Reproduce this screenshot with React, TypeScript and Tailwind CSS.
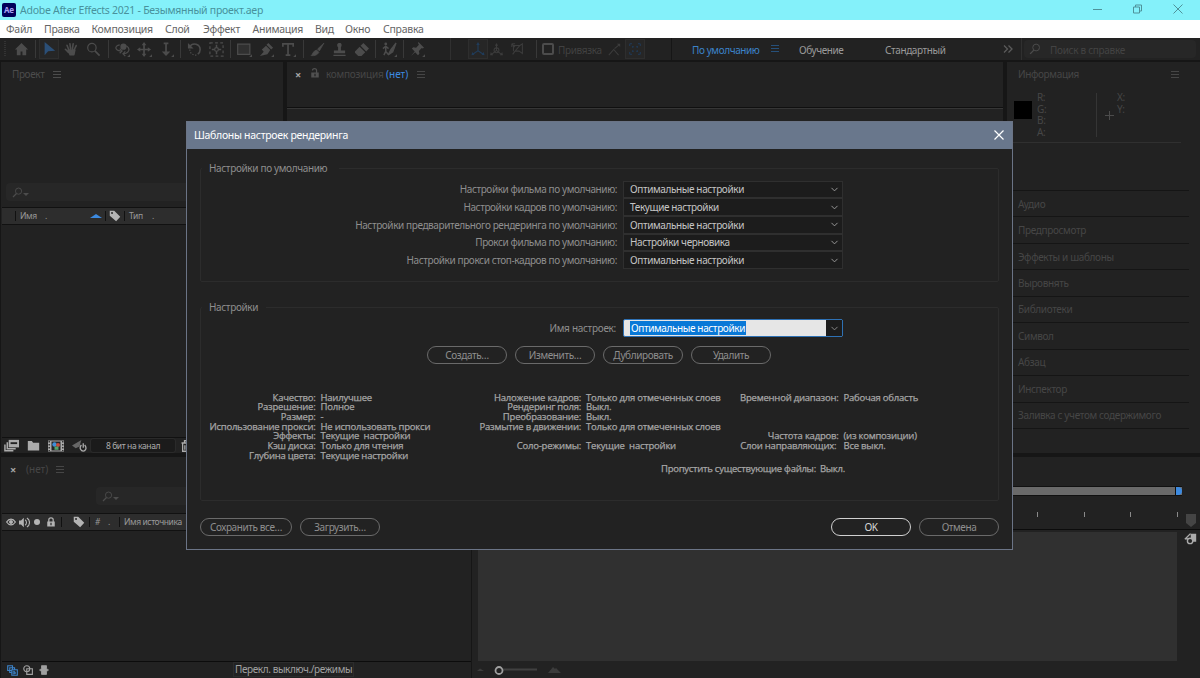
import type { ReactNode } from "react";
import { ChevronDown } from "lucide-react";

type IconProps = { children: ReactNode; size?: number; className?: string };

function Icon({ children, size = 16, className = "" }: IconProps) {
  return (
    <svg
      width={size}
      height={size}
      viewBox="0 0 16 16"
      fill="none"
      stroke="currentColor"
      strokeWidth={1.3}
      className={`shrink-0 ${className}`}
    >
      {children}
    </svg>
  );
}

const corner = <path d="M16 13v3h-3z" fill="currentColor" stroke="none" />;

const icons = {
  home: <path d="M8 1 1 8h2v6h4v-4h2v4h4V8h2z" fill="currentColor" stroke="none" />,
  select: <path d="M3 0v15l4-4.500 8-.5z" fill="currentColor" stroke="none" />,
  hand: (
    <path
      d="M5 8 3.200 3.500M7 7 6.300 1.800M9 7l.8-5.200M11 8l2-4.200M4.500 11 1.500 7.800M4.500 8.500h7l-1 5h-4z"
      fill="currentColor"
      strokeWidth={1.7}
      strokeLinecap="round"
      strokeLinejoin="round"
    />
  ),
  zoom: (
    <>
      <circle cx="6.300" cy="6" r="4.500" />
      <path d="m9.500 9.500 5 5" strokeWidth={1.8} />
    </>
  ),
  orbit: (
    <>
      <circle cx="9" cy="5" r="3.300" fill="currentColor" stroke="none" />
      <path d="M5 3C-1 4 0 9 6 9.500M5 7l2.500 2.500L5 12M12 4c5 3 3 8-3 8.500M11 10l-2.500 2.500L11 15" />
      {corner}
    </>
  ),
  pan: (
    <>
      <path d="M7.500 2v12M2 8h11" strokeWidth={1.8} />
      <path d="M7.500 0 5 3.500h5zM7.500 16 5 12.500h5zM0 8l3.500-2.500v5zM15 8l-3.500-2.500v5z" fill="currentColor" stroke="none" />
      {corner}
    </>
  ),
  dolly: (
    <>
      <path d="M7.500 1v12M5 1.500h5" strokeWidth={1.8} />
      <path d="M3 10h9l-4.500 5z" fill="currentColor" stroke="none" />
      {corner}
    </>
  ),
  rotate: (
    <>
      <path d="M3 5c3-5 11-3 11 3 0 2-1 4-2.500 5" strokeWidth={1.7} />
      <path d="M3 8c0 4 3 6 7 6" strokeDasharray="1.500 1.500" />
      <path d="M1 1v6h6z" fill="currentColor" stroke="none" />
    </>
  ),
  anchor: (
    <>
      <rect x="1" y="1" width="14" height="14" strokeDasharray="3 2.500" />
      <circle cx="8" cy="8" r="2" />
      <path d="M8 3v3M8 10v3M3 8h3M10 8h3" strokeWidth={1.6} />
    </>
  ),
  rect: (
    <>
      <path d="M.7 2.200h13v11H.7z" fill="#303030" />
      {corner}
    </>
  ),
  pen: (
    <>
      <path d="M10 1 15 6l-2 2-5-5zM7.500 4 12 8.500 9 13 1 15 5 10.500 3 8z" fill="currentColor" stroke="none" />
      {corner}
    </>
  ),
  type: (
    <>
      <path d="M2 5V2h11v3M7.500 2v12M5 14h5" strokeWidth={1.8} />
      {corner}
    </>
  ),
  brush: <path d="M15 1 8 7.500l2 2zM7 8.500 9.500 11C8 14 5 15 1 14.500c2-1 2-5 6-6z" fill="currentColor" strokeWidth={0.7} />,
  stamp: (
    <path d="M8 1c3 0 2.500 3 1.500 4.500V9H14v3H2V9h4.500V5.500C5 4 5 1 8 1zM1.500 13.500h13V15h-13z" fill="currentColor" stroke="none" />
  ),
  eraser: <path d="M10 1 16 7l-3 3-6-6zM6 5l6 6-4 4H4.500L1 11.500V10z" fill="currentColor" stroke="none" />,
  roto: (
    <>
      <circle cx="4" cy="2" r="1.500" fill="currentColor" stroke="none" />
      <path d="M1 7l3-2.500L7 7M4 5v5l-2 4M4 10l2.500 3" strokeWidth={1.6} />
      <path d="M15 1 9.500 8l-3 6 5-3.500z" fill="currentColor" />
      {corner}
    </>
  ),
  pin: (
    <>
      <path d="m9 0 6 6-1.500 1-1-.5-3 3 .5 3-1.500 1.500-3-3L1 15l4-5-3-3 1.500-1.500 3 .5 3-3L8.500 1z" fill="currentColor" stroke="none" />
      {corner}
    </>
  ),
  axis: (
    <>
      <path d="M8 2v8L2 14M8 10l6 4" />
      <path d="M8 0 6 3.500h4zM.5 15l1-3.500L4 14.500zM15.500 15l-1-3.500-2.500 3z" fill="currentColor" stroke="none" />
    </>
  ),
  worldAxis: (
    <>
      <circle cx="8" cy="9" r="3" />
      <path d="M8 2v7l-6 5M8 9l6 5" />
      <path d="M8 0 6 3.500h4zM0 15l1-4 3 4zM16 15l-1-4-3 4z" fill="currentColor" stroke="none" />
    </>
  ),
  viewAxis: <path d="M3 3h8l3-2v12l-4-3H5l-3 4M3 3v7M1 1l4 4M1 1h4M1 1v4M11 3l-6 7" />,
  snap: (
    <>
      <path d="m1 15 6-7 6 7M8 7l6-5" />
      <path d="M11 1h4v4z" fill="currentColor" stroke="none" />
    </>
  ),
  bounds: (
    <>
      <path d="M1 4V1h3M12 1h3v3M15 12v3h-3M4 15H1v-3" />
      <path d="M4 5h2.500M9.500 5H12M4 11h2.500M9.500 11H12M5 4v2.500M11 4v2.500M5 9.500V12M11 9.500V12" strokeWidth={1.1} />
    </>
  ),
  search: (
    <>
      <circle cx="9.500" cy="6" r="4.500" />
      <path d="m6.500 9.500-5 5" strokeWidth={1.8} />
    </>
  ),
  tag: <path d="M1 1h6l8 8-5.500 6L1 7.500zM4 2.700a1.300 1.300 0 1 0 .1 2.600 1.300 1.300 0 0 0-.1-2.600z" fill="currentColor" fillRule="evenodd" stroke="none" />,
  eye: (
    <>
      <path d="M1 8c4-6 10-6 14 0-4 6-10 6-14 0z" strokeWidth={2} />
      <circle cx="8" cy="8" r="2.500" fill="currentColor" />
    </>
  ),
  speaker: (
    <>
      <path d="M0 5h3l4-4v14l-4-4H0z" fill="currentColor" stroke="none" />
      <path d="M9 4c2.500 2 2.500 6 0 8M11.500 1.500c5 3 5 10 0 13" strokeWidth={1.6} />
    </>
  ),
  lock: (
    <>
      <path d="M4.500 8V4.500c0-4 7-4 7 0V8" strokeWidth={2} />
      <path d="M2 7h12v8H2zM7 9v4h2V9z" fill="currentColor" fillRule="evenodd" stroke="none" />
    </>
  ),
  unlock: (
    <>
      <path d="M4 4c0-4 6.500-4 6.500 0v4" strokeWidth={2} />
      <path d="M2 7h12v8H2zM7 9v4h2V9z" fill="currentColor" fillRule="evenodd" stroke="none" />
    </>
  ),
  footage: (
    <>
      <path d="M5 2h11v8H5z" fill="currentColor" stroke="none" />
      <path d="M7 4.500h7v2H7z" fill="#222" stroke="none" />
      <path d="M3.500 4.500v7h9M1 7v6.500h9" strokeWidth={1.6} />
    </>
  ),
  folder: <path d="M1 2.500h5l1.500 2H15V14H1z" fill="currentColor" stroke="none" />,
  comp: (
    <>
      <path d="M0 2.500h16v11H0z" fill="currentColor" stroke="none" />
      <path d="M1.200 3v10M14.800 3v10" stroke="#222" strokeDasharray="1.500 1.500" />
      <path d="M3.500 3.500h9v9h-9z" fill="#252525" stroke="none" />
      <circle cx="6.500" cy="6.500" r="2.200" fill="#3f8fd8" stroke="none" />
      <circle cx="10" cy="7" r="2" fill="#c44c3c" stroke="none" />
      <path d="M6.500 8.500h4v3.300h-4z" fill="#55a36a" stroke="none" />
    </>
  ),
  rocket: (
    <>
      <path d="M0 8 10 2 8 9l-4 2zM1 13l3-4" fill="currentColor" stroke="none" opacity={0.5} />
      <path d="M10 7.500c-3 3.500 0 6.500 2 6.500s4.500-3 1.500-6.500M12 5.500v5" strokeWidth={1.4} />
    </>
  ),
  trash: <path d="M2 4h12M6 3V1h4v2M3.500 5v10h9V5M6.500 7v6M9.500 7v6" strokeWidth={1.7} />,
  switches: (
    <>
      <path d="M1 1h7v7H1zM4 4h7v7H4z" strokeWidth={1.6} />
      <path d="M7 7h8v8H7z" fill="#222" strokeWidth={1.6} />
      <path d="M9 9h2v4H9zM12 10v3" />
    </>
  ),
  modes: (
    <>
      <circle cx="6" cy="6" r="4.800" strokeWidth={1.8} />
      <path d="M6 6h9v9H6z" strokeWidth={1.8} />
    </>
  ),
  braces: <path d="M4 1h8v4l2 3-2 3v4H4v-4L2 8l2-3zM.5 7v2M15.500 7v2" fill="currentColor" />,
  compMarker: (
    <>
      <path d="M8 2h7v10H9z" fill="currentColor" stroke="none" />
      <path d="m1 9 7-7M1 8.500h5" strokeWidth={1.7} />
      <circle cx="7.500" cy="11" r="3.300" fill="#222" strokeWidth={1.7} />
    </>
  ),
};

const menu = [
  { label: "Файл", width: "w-[38px]" },
  { label: "Правка", width: "w-[47.500px]" },
  { label: "Композиция", width: "w-[73.500px]" },
  { label: "Слой", width: "w-[38px]" },
  { label: "Эффект", width: "w-[49.500px]" },
  { label: "Анимация", width: "w-[62.500px]" },
  { label: "Вид", width: "w-[30px]" },
  { label: "Окно", width: "w-[38px]" },
  { label: "Справка", width: "w-[50px]" },
];

const sidePanels = [
  "Аудио",
  "Предпросмотр",
  "Эффекты и шаблоны",
  "Выровнять",
  "Библиотеки",
  "Символ",
  "Абзац",
  "Инспектор",
  "Заливка с учетом содержимого",
];

const defaults = [
  ["Настройки фильма по умолчанию:", "Оптимальные настройки"],
  ["Настройки кадров по умолчанию:", "Текущие настройки"],
  ["Настройки предварительного рендеринга по умолчанию:", "Оптимальные настройки"],
  ["Прокси фильма по умолчанию:", "Настройки черновика"],
  ["Настройки прокси стоп-кадров по умолчанию:", "Оптимальные настройки"],
];

const qualityInfo = [
  ["Качество:", "Наилучшее"],
  ["Разрешение:", "Полное"],
  ["Размер:", "-"],
  ["Использование прокси:", "Не использовать прокси"],
  ["Эффекты:", "Текущие  настройки"],
  ["Кэш диска:", "Только для чтения"],
  ["Глубина цвета:", "Текущие настройки"],
];

const frameInfo = [
  ["Наложение кадров:", "Только для отмеченных слоев"],
  ["Рендеринг поля:", "Выкл."],
  ["Преобразование:", "Выкл."],
  ["Размытие в движении:", "Только для отмеченных слоев"],
  ["", ""],
  ["Соло-режимы:", "Текущие  настройки"],
];

const timeInfo = [
  ["Временной диапазон:", "Рабочая область"],
  ["", ""],
  ["", ""],
  ["", ""],
  ["Частота кадров:", "(из композиции)"],
  ["Слои направляющих: ", "Все выкл."],
];

function Sep() {
  return (
    <div className="flex w-[6px] shrink-0 justify-center">
      <div className="h-[18px] w-px bg-[#393939]" />
    </div>
  );
}

function Tool({ children, active, wide }: { children: ReactNode; active?: boolean; wide?: boolean }) {
  return (
    <div className={`flex shrink-0 justify-center ${wide ? "w-[23px]" : "w-[22px]"}`}>
      <div
        className={`flex h-5 w-5 items-center justify-center ${
          active ? "border border-[#2e2e2e] bg-[#262626] text-[#2b4f77]" : ""
        }`}
      >
        <Icon size={active ? 14 : 15}>{children}</Icon>
      </div>
    </div>
  );
}

function Burger({ className = "text-[#4d4d4d]" }: { className?: string }) {
  return (
    <svg width="8" height="8" viewBox="0 0 8 8" className={`shrink-0 ${className}`} fill="currentColor">
      <path d="M0 0h8v1H0zM0 3h8v1H0zM0 6h8v1H0z" />
    </svg>
  );
}

function Toolbar() {
  return (
    <div className="flex h-6 items-center border-b-2 border-[#161616] bg-[#222222] text-[#4c4c4c]">
      <div className="ml-1 mr-1 h-4 w-[2px] bg-[repeating-linear-gradient(#333_0_1px,transparent_1px_2px)]" />
      <Tool>{icons.home}</Tool>
      <Sep />
      <Tool active>{icons.select}</Tool>
      <Tool>{icons.hand}</Tool>
      <Tool wide>{icons.zoom}</Tool>
      <Sep />
      <Tool>{icons.orbit}</Tool>
      <Tool>{icons.pan}</Tool>
      <Tool>{icons.dolly}</Tool>
      <Sep />
      <Tool>{icons.rotate}</Tool>
      <Tool>{icons.anchor}</Tool>
      <Sep />
      <Tool>{icons.rect}</Tool>
      <Tool>{icons.pen}</Tool>
      <Tool wide>{icons.type}</Tool>
      <Sep />
      <Tool>{icons.brush}</Tool>
      <Tool>{icons.stamp}</Tool>
      <Tool>{icons.eraser}</Tool>
      <Sep />
      <Tool>{icons.roto}</Tool>
      <Sep />
      <Tool>{icons.pin}</Tool>
      <div className="ml-[22px] mr-[17px] h-full w-px shrink-0 bg-[#303030]" />
      <div className="flex h-5 w-5 shrink-0 items-center justify-center border border-[#2e2e2e] bg-[#262626] text-[#203c5a]">
        <Icon size={14}>{icons.axis}</Icon>
      </div>
      <div className="flex w-[45px] shrink-0 items-center gap-[8px] pl-[2px] text-[#3c3c3c]">
        <Icon size={13}>{icons.worldAxis}</Icon>
        <Icon size={13}>{icons.viewAxis}</Icon>
      </div>
      <Sep />
      <div className="ml-[3px] h-[12px] w-[12px] shrink-0 rounded-[2px] border-2 border-[#4c4c4c]" />
      <span className="ml-[4px] w-[47px] shrink-0 pt-[2px] text-[10px] tracking-[-0.350px] text-[#414141]">Привязка</span>
      <Icon size={13} className="ml-[3px] mr-[4px] text-[#3c3c3c]">{icons.snap}</Icon>
      <div className="flex h-5 w-5 shrink-0 items-center justify-center border border-[#2e2e2e] bg-[#262626] text-[#203c5a]">
        <Icon size={12}>{icons.bounds}</Icon>
      </div>
      <div className="ml-[26px] h-full w-px shrink-0 bg-[#161616]" />
      <span className="ml-[20px] w-[79px] shrink-0 pt-[2px] text-[10px] text-[#3c83c9]">По умолчанию</span>
      <Burger className="text-[#26507a]" />
      <span className="ml-[20px] w-[86px] shrink-0 pt-[2px] text-[10px] text-[#9a9a9a]">Обучение</span>
      <span className="w-[118px] shrink-0 pt-[2px] text-[10px] text-[#9a9a9a]">Стандартный</span>
      <svg width="10" height="8" viewBox="0 0 10 8" fill="none" stroke="#5a5a5a" strokeWidth="1.300">
        <path d="m1 .5 3.500 3.500L1 7.500M5.500.5 9 4 5.500 7.500" />
      </svg>
      <div className="ml-[8px] mr-[2px] h-full w-px shrink-0 bg-[#303030]" />
      <div className="flex h-[18px] w-[172px] shrink-0 items-center rounded bg-[#272727] pl-[5px]">
        <Icon size={12}>{icons.search}</Icon>
        <span className="ml-[9px] pt-[2px] text-[10px] tracking-[-0.300px] text-[#434343]">Поиск в справке</span>
      </div>
    </div>
  );
}

function ProjectPanel() {
  return (
    <section className="ml-px flex w-[282px] shrink-0 flex-col bg-[#222222]">
      <div className="flex h-[121px] items-start gap-[9px] pl-[11px] pt-[5px]">
        <span className="w-[32px] text-[10px] leading-[15px] text-[#4c4c4c]">Проект</span>
        <Burger className="mt-[4px] text-[#4c4c4c]" />
      </div>
      <div className="ml-[5px] flex h-[18px] items-center rounded bg-[#272727] pl-[6px] text-[#4c4c4c]">
        <Icon size={11}>{icons.search}</Icon>
        <span className="mt-1 border-x-[3px] border-t-[3px] border-x-transparent border-t-[#4c4c4c]" />
      </div>
      <div className="ml-px mt-[6px] flex h-[18px] items-center border-y border-[#111] bg-[#2d2d2d] text-[8.500px] text-[#9a9a9a]">
        <span className="ml-[13px] mr-[4px] h-[10px] w-px bg-[#111]" />
        <span className="w-[25px] pt-px">Имя</span>
        <span className="w-[45px]">.</span>
        <span className="border-x-[6px] border-b-[4px] border-x-transparent border-b-[#3c8ae0]" />
        <span className="ml-[3px] mr-[3px] h-[10px] w-px bg-[#111]" />
        <Icon size={12} className="text-[#b4b4b4]">{icons.tag}</Icon>
        <span className="ml-[3px] mr-[4px] h-[10px] w-px bg-[#111]" />
        <span className="w-[23px] pt-px">Тип</span>
        <span>.</span>
      </div>
      <div className="mt-auto ml-px flex h-[16px] items-center border-t border-[#111] pl-[2px] text-[#ababab]">
        <Icon size={15}>{icons.footage}</Icon>
        <Icon size={13} className="ml-[8px]">{icons.folder}</Icon>
        <Icon size={16} className="ml-[8px]">{icons.comp}</Icon>
        <Icon size={15} className="ml-[8px]">{icons.rocket}</Icon>
        <span className="ml-[4px] flex h-[13px] w-[84px] items-center justify-center rounded-[2px] bg-[#1b1b1b] pt-px text-[8.500px] outline outline-[#2a2a2a]">
          8 бит на канал
        </span>
        <Icon size={12} className="ml-[5px]">{icons.trash}</Icon>
      </div>
    </section>
  );
}

function InfoPanel() {
  return (
    <section className="flex w-[193px] shrink-0 flex-col bg-[#222222] text-[10px] tracking-[-0.350px] text-[#464646]">
      <div className="flex h-[27px] items-start justify-between pl-[11px] pr-[21px] pt-[5px]">
        <span className="leading-[15px]">Информация</span>
        <Burger className="mt-[4px]" />
      </div>
      <div className="mr-[19px] flex h-[54px] border-b border-[#303030] pl-[7px]">
        <div className="mt-[12px] h-[18px] w-[18px] bg-black" />
        <div className="ml-[5px] flex w-[59px] flex-col pt-[3px] leading-[11.700px]">
          <span>R:</span>
          <span>G:</span>
          <span>B:</span>
          <span>A:</span>
        </div>
        <div className="mt-[4px] h-[44px] w-px bg-[#353535]" />
        <svg width="9" height="9" viewBox="0 0 9 9" stroke="#4c4c4c" className="ml-[8px] mt-[22px]">
          <path d="M4.500 0v9M0 4.500h9" />
        </svg>
        <div className="ml-[3px] flex flex-col pt-[3px] leading-[11.700px]">
          <span>X:</span>
          <span>Y:</span>
        </div>
      </div>
      <div className="mr-[11px] mt-[47px] border-t border-[#151515]">
        {sidePanels.map((name) => (
          <div key={name} className="flex h-[26.440px] items-center border-b border-[#151515] pl-[11px]">
            {name}
          </div>
        ))}
      </div>
    </section>
  );
}

function CompositionPanel() {
  return (
    <section className="mx-1 flex-1 bg-[#222222]">
      <div className="flex h-[46px] items-start border-b border-[#101010] pl-[8px] pt-[5px] text-[10px] leading-[15px] text-[#464646] shadow-[0_1px_0_#363636]">
        <span className="w-[15px] text-[11px] font-bold text-[#a4a4a4]">×</span>
        <Icon size={10} className="mr-[6px] mt-[1px] text-[#505050]">{icons.unlock}</Icon>
        <span className="w-[60px] tracking-[-0.250px]">композиция</span>
        <span className="w-[31px] text-[#3c8ae0] tracking-normal">(нет)</span>
        <Burger className="mt-[4px]" />
      </div>
    </section>
  );
}

function Timeline() {
  return (
    <div className="flex h-[221px]">
      <section className="ml-px flex w-[470px] shrink-0 flex-col bg-[#222222]">
        <div className="flex h-[30px] items-start pl-[9px] pt-[5px] text-[10px] leading-[15px] text-[#464646]">
          <span className="w-[16px] text-[11px] font-bold text-[#a4a4a4]">×</span>
          <span className="w-[30px] tracking-normal">(нет)</span>
          <Burger className="mt-[4px]" />
        </div>
        <div className="ml-[95px] flex h-[18px] items-center rounded bg-[#272727] pl-[6px] text-[#4c4c4c]">
          <Icon size={11}>{icons.search}</Icon>
          <span className="mt-1 border-x-[3px] border-t-[3px] border-x-transparent border-t-[#4c4c4c]" />
        </div>
        <div className="mt-[8px] ml-px flex h-[18px] items-center border-y border-[#111] bg-[#2d2d2d] pl-[4px] text-[8.500px] text-[#9a9a9a]">
          <Icon size={10} className="text-[#b4b4b4]">{icons.eye}</Icon>
          <Icon size={11} className="ml-[3px] text-[#b4b4b4]">{icons.speaker}</Icon>
          <span className="ml-[4px] h-[6px] w-[6px] rounded-full bg-[#b4b4b4]" />
          <Icon size={10} className="ml-[6px] text-[#b4b4b4]">{icons.lock}</Icon>
          <span className="ml-[5px] mr-[11px] h-[10px] w-px bg-[#111]" />
          <Icon size={12} className="text-[#b4b4b4]">{icons.tag}</Icon>
          <span className="ml-[4px] mr-[5px] h-[10px] w-px bg-[#111]" />
          <span className="w-[13px] text-[8px] italic">#</span>
          <span className="w-[11px]">.</span>
          <span className="mr-[4px] h-[10px] w-px bg-[#111]" />
          <span className="whitespace-nowrap pt-px">Имя источника</span>
        </div>
        <div className="ml-px mt-auto flex h-[17px] items-center border-t border-[#0c0c0c] text-[#a0a0a0]">
          <Icon size={11} className="ml-[5px] text-[#3c83c9]">{icons.switches}</Icon>
          <Icon size={10} className="ml-[5px]">{icons.modes}</Icon>
          <Icon size={10} className="ml-[6px]">{icons.braces}</Icon>
          <span className="mb-px ml-[185px] whitespace-nowrap px-px text-[10px] leading-[13px] outline outline-[#2c2c2c]">
            Перекл. выключ./режимы
          </span>
        </div>
      </section>
      <section className="ml-px flex w-[728px] flex-col bg-[#222222]">
        <div className="ml-[6px] mt-[29px] flex h-[10px] w-[704px] border-y border-[#111] bg-[#6a6a6a]">
          <span className="ml-auto h-full w-[7px] rounded-r-full border-l border-[#111] bg-[#3c8ae0]" />
        </div>
        <div className="flex h-[34px] border-b border-[#0c0c0c]">
          <div className="ml-[565px] flex gap-[45.500px] pt-[16px]">
            {[0, 1, 2, 3].map((tick) => (
              <span key={tick} className="h-[5px] w-px bg-[#8a8a8a]" />
            ))}
          </div>
          <svg width="10" height="13" viewBox="0 0 10 13" className="ml-[8px] mt-[18px]">
            <path d="M0 0h10v9l-5 4-5-4z" fill="#454545" />
          </svg>
        </div>
        <div className="flex h-[131px] border-t-2 border-[#222]">
          <div className="ml-[6px] w-[699px] bg-[#303030]" />
          <Icon size={13} className="ml-[7px] text-[#ababab]">{icons.compMarker}</Icon>
        </div>
        <div className="flex h-[17px] items-center">
          <svg width="94" height="12" viewBox="0 0 94 12" className="ml-[3px]">
            <path d="M2 7l3-2.500L9 7z" fill="#3c3c3c" />
            <path d="M28 5.500h34" stroke="#404040" strokeWidth="2" />
            <circle cx="24" cy="6.500" r="3.500" fill="none" stroke="#a0a0a0" strokeWidth="1.800" />
            <path d="m73 9 5-6 2 2 1-1 5 5z" fill="#3c3c3c" />
          </svg>
        </div>
      </section>
    </div>
  );
}

function Select({ value }: { value: string }) {
  return (
    <div className="flex h-[17.700px] w-[220px] items-center justify-between border border-[#2f2f2f] bg-[#1c1c1c] pl-[6px] pr-[2px] text-[#c4c4c4]">
      <span className="tracking-[-0.380px]">{value}</span>
      <ChevronDown size={11} strokeWidth={2} className="text-[#a0a0a0]" />
    </div>
  );
}

function Pill({ children, width = "w-[80px]", primary }: { children: ReactNode; width?: string; primary?: boolean }) {
  return (
    <button
      className={`h-[18px] shrink-0 rounded-full border text-[10px] leading-[15px] ${width} ${
        primary ? "border-[#d0d0d0] text-[#d8d8d8]" : "border-[#6a6a6a] text-[#8e8e8e]"
      }`}
    >
      {children}
    </button>
  );
}

function Info({ rows, className, label }: { rows: string[][]; className: string; label: string }) {
  return (
    <dl className={className}>
      {rows.map(([name, value], i) => (
        <div key={i} className="flex h-[9.700px] gap-[5px] whitespace-pre leading-[9.700px]">
          <dt className={`shrink-0 text-right ${label}`}>{name}</dt>
          <dd>{value}</dd>
        </div>
      ))}
    </dl>
  );
}

function Dialog() {
  return (
    <div className="absolute left-[186px] top-[121px] flex h-[429px] w-[827px] flex-col border border-[#6b7486] bg-[#222222] text-[10px] text-[#8e8e8e]">
      <header className="flex h-[26.500px] items-center justify-between bg-[#69778c] pb-[1px] pl-[7px] pr-[8px] text-[10.500px] tracking-[-0.300px] text-white">
        <span>Шаблоны настроек рендеринга</span>
        <svg width="10" height="10" viewBox="0 0 10 10" stroke="white" strokeWidth="1.200">
          <path d="m.5.5 9 9M9.500.5l-9 9" />
        </svg>
      </header>

      <fieldset className="mx-[13px] mt-[12.500px] h-[121px] rounded-[2px] border border-[#2c2c2c]">
        <legend className="ml-[1px] h-[15px] w-[137px] whitespace-nowrap pl-[7px] leading-[15px] tracking-[-0.350px]">
          Настройки по умолчанию
        </legend>
        <div className="mt-[4.500px]">
          {defaults.map(([label, value]) => (
            <div key={label} className="flex h-[17.700px] items-center">
              <span className="w-[416px] text-right">{label}</span>
              <div className="ml-[6px]">
                <Select value={value} />
              </div>
            </div>
          ))}
        </div>
      </fieldset>

      <fieldset className="mx-[13px] mt-[18px] h-[201px] rounded-[2px] border border-[#2c2c2c]">
        <legend className="ml-[1px] h-[15px] w-[64px] pl-[7px] leading-[15px] tracking-[-0.350px]">Настройки</legend>
        <div className="mt-[4px] flex h-[18px] items-center">
          <span className="w-[415px] text-right tracking-[-0.300px]">Имя настроек:</span>
          <div className="ml-[7px] flex h-[18px] w-[220px] items-center rounded-[2px] border border-[#2e71b4] bg-[#e6e6e6]">
            <span className="ml-[6px] bg-[#0878d7] px-px leading-[14px] tracking-[-0.380px] text-white">
              Оптимальные настройки
            </span>
            <span className="ml-auto flex h-full w-[16px] items-center justify-center bg-[#1c1c1c]">
              <ChevronDown size={11} strokeWidth={2} />
            </span>
          </div>
        </div>
        <div className="ml-[226px] mt-[9px] flex gap-[8px]">
          <Pill>Создать…</Pill>
          <Pill>Изменить…</Pill>
          <Pill>Дублировать</Pill>
          <Pill>Удалить</Pill>
        </div>
        <div className="font-['Open_Sans',sans-serif] text-[9.500px] tracking-[-0.220px] text-[#a6a6a6] [-webkit-text-stroke:0.250px_#a6a6a6]">
          <div className="mt-[28.500px] flex h-[71px]">
            <Info rows={qualityInfo} className="w-[239.500px]" label="w-[114.500px]" />
            <Info rows={frameInfo} className="w-[297px]" label="w-[140.500px]" />
            <Info rows={timeInfo} className="w-[240px]" label="w-[101px]" />
          </div>
          <div className="ml-[460px] flex gap-[4px] leading-[10px] tracking-[-0.260px]">
            <span>Пропустить существующие файлы:</span>
            <span>Выкл.</span>
          </div>
        </div>
      </fieldset>

      <footer className="mx-[13px] mt-[17px] flex">
        <Pill width="w-[92px]">Сохранить все…</Pill>
        <div className="ml-[8px]">
          <Pill>Загрузить…</Pill>
        </div>
        <div className="ml-auto flex gap-[8px]">
          <Pill primary>OK</Pill>
          <Pill>Отмена</Pill>
        </div>
      </footer>
    </div>
  );
}

export default function App() {
  return (
    <div className="relative flex h-[678px] w-[1200px] flex-col overflow-hidden bg-[#161616] font-['Noto_Sans',sans-serif] leading-none tracking-[-0.400px]">
      <header className="flex h-5 items-center bg-[#84f1fa] pl-[2px] text-[10.500px] tracking-[-0.260px] text-[#48929c]">
        <span className="mr-[4px] flex h-[14px] w-[14px] items-center justify-center rounded-[2px] bg-[#00005b] text-[8px] font-bold text-[#a9a5f5]">
          Ae
        </span>
        <span className="pt-px">Adobe After Effects 2021 - Безымянный проект.aep</span>
        <svg width="91" height="10" viewBox="0 0 91 10" className="ml-auto mr-[17px] mb-[3px]" fill="none" stroke="#4f929a">
          <path d="M1 5.500h9M41.500 3h6v6h-6zM43.500 3V1h6v6h-2M81.500.5l9 9M90.500.5l-9 9" />
        </svg>
      </header>
      <nav className="flex h-[18px] items-center bg-white pl-[6px] text-[10.500px] tracking-[-0.250px] text-[#666]">
        {menu.map(({ label, width }) => (
          <span key={label} className={width}>{label}</span>
        ))}
      </nav>
      <Toolbar />
      <main className="flex h-[391px] shrink-0">
        <ProjectPanel />
        <CompositionPanel />
        <InfoPanel />
      </main>
      <div className="h-1 shrink-0" />
      <Timeline />
      <Dialog />
    </div>
  );
}
